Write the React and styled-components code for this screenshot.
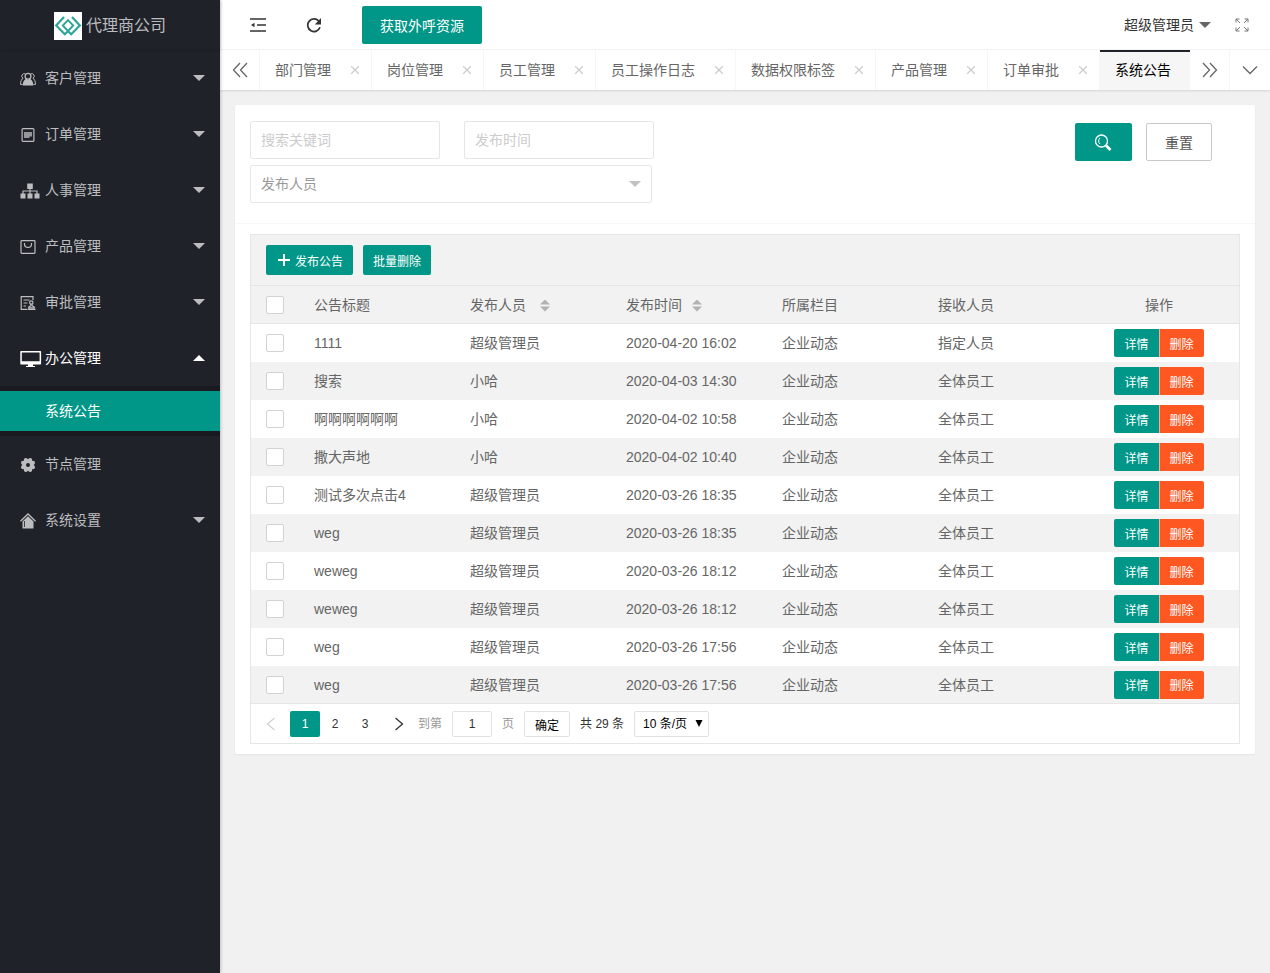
import { useState } from "react";
import styled, { createGlobalStyle, css } from "styled-components";

const menus = [
    { name: "客户管理", icon: "users", more: true },
    { name: "订单管理", icon: "order", more: true },
    { name: "人事管理", icon: "tree", more: true },
    { name: "产品管理", icon: "bag", more: true },
    { name: "审批管理", icon: "approve", more: true },
    { name: "办公管理", icon: "screen", more: true, children: ["系统公告"] },
    { name: "节点管理", icon: "gear" },
    { name: "系统设置", icon: "home", more: true },
];

const tabs = ["部门管理", "岗位管理", "员工管理", "员工操作日志", "数据权限标签", "产品管理", "订单审批"];

const rows = [
    ["1111", "超级管理员", "2020-04-20 16:02", "企业动态", "指定人员"],
    ["搜索", "小哈", "2020-04-03 14:30", "企业动态", "全体员工"],
    ["啊啊啊啊啊啊", "小哈", "2020-04-02 10:58", "企业动态", "全体员工"],
    ["撒大声地", "小哈", "2020-04-02 10:40", "企业动态", "全体员工"],
    ["测试多次点击4", "超级管理员", "2020-03-26 18:35", "企业动态", "全体员工"],
    ["weg", "超级管理员", "2020-03-26 18:35", "企业动态", "全体员工"],
    ["weweg", "超级管理员", "2020-03-26 18:12", "企业动态", "全体员工"],
    ["weweg", "超级管理员", "2020-03-26 18:12", "企业动态", "全体员工"],
    ["weg", "超级管理员", "2020-03-26 17:56", "企业动态", "全体员工"],
    ["weg", "超级管理员", "2020-03-26 17:56", "企业动态", "全体员工"],
];

const menuIcons = {
    users: (
        <svg width="16" height="14" viewBox="0 0 16 14">
            <g fill="none" stroke="currentColor">
                <path d="M5.500 2A2.400 2.400 0 1 0 3 6.200C1.400 7.200.6 9.400.5 12.400h2M10.500 2A2.400 2.400 0 1 1 13 6.200c1.600 1 2.400 3.200 2.500 6.200h-2" />
            </g>
            <path d="M6.200 6.800C3.800 8 2.800 10 2.700 13.400h10.600C13.200 10 12.200 8 9.800 6.800L8 7.600z" fill="currentColor" />
            <circle cx="8" cy="4.300" r="2.900" fill="#20222a" stroke="currentColor" strokeWidth="1.300" />
        </svg>
    ),
    order: (
        <svg width="16" height="14" viewBox="-1 0 16 14">
            <rect x="1.100" y=".6" width="11.800" height="12.800" rx="1" fill="none" stroke="currentColor" strokeWidth="1.200" />
            <path d="M3 4h8v4.500H8.500V10H3z" fill="currentColor" opacity=".75" />
        </svg>
    ),
    tree: (
        <svg width="20" height="16" viewBox="0 0 20 16">
            <path d="M10 5v6M3 11V8h14v3" fill="none" stroke="currentColor" strokeWidth="1.200" />
            <path d="M7.200.5h5.600V6H7.200zM.5 10.500h5v5h-5zM7.500 10.500h5v5h-5zM14.500 10.500h5v5h-5z" fill="currentColor" />
        </svg>
    ),
    bag: (
        <svg width="16" height="14" viewBox="0 0 16 14" fill="none" stroke="currentColor" strokeWidth="1.200">
            <rect x="1" y=".6" width="14" height="12.800" rx=".8" />
            <path d="M4.500 3v1.200c0 4.300 7 4.300 7 0V3" />
        </svg>
    ),
    approve: (
        <svg width="16" height="14" viewBox="0 0 16 14" fill="none" stroke="currentColor" strokeWidth="1.200">
            <path d="M13 4V.6H1.200v12.800H7M3.500 4h6M3.500 7h4M3.500 10H6" />
            <circle cx="11.300" cy="6.500" r="1.700" />
            <path d="M10.800 8.200v1.600c-1.400.3-2.300 1-2.300 2h6c0-1-.9-1.700-2.300-2V8.200M7.500 13.400h8" />
        </svg>
    ),
    screen: (
        <svg width="22" height="16" viewBox="0 0 22 16">
            <path d="M1 0h19.400c.4 0 .7.300.7.700v12c0 .4-.3.700-.7.700H13V15h2v1H6v-1h2v-1.600H1c-.4 0-.7-.3-.7-.7v-12C.3.3.6 0 1 0zM1.800 1.500v8.700h17.800V1.500z" fill="currentColor" fillRule="evenodd" />
        </svg>
    ),
    gear: (
        <svg width="16" height="14" viewBox="-1 0 16 14">
            <circle cx="7" cy="7" r="4" fill="none" stroke="currentColor" strokeWidth="4" />
            <g fill="currentColor">
                <circle cx="4.800" cy="2" r="2" />
                <circle cx="9.200" cy="2" r="2" />
                <circle cx="4.800" cy="12" r="2" />
                <circle cx="9.200" cy="12" r="2" />
                <circle cx="2" cy="4.800" r="2" />
                <circle cx="2" cy="9.200" r="2" />
                <circle cx="12" cy="4.800" r="2" />
                <circle cx="12" cy="9.200" r="2" />
            </g>
        </svg>
    ),
    home: (
        <svg width="16" height="16" viewBox="0 0 16 16">
            <path d="M.5 8.200 8 1l7.500 7.200" fill="none" stroke="currentColor" strokeWidth="1.300" />
            <path d="M8 3.300 13.500 8.500V15.500H2.500V8.500z" fill="currentColor" />
            <path d="M4.500 8v6" stroke="#20222a" strokeWidth=".8" />
        </svg>
    ),
};

const Chevron = ({ d, size = 16 }) => (
    <svg width={size} height={size} viewBox="0 0 16 16" fill="none" stroke="currentColor" strokeWidth="1.300">
        <path d={d} />
    </svg>
);

const App = () => {
    const [checked, setChecked] = useState([]);
    const [page, setPage] = useState(1);

    const toggle = (i) =>
        setChecked((prev) => (prev.includes(i) ? prev.filter((n) => n !== i) : [...prev, i]));

    const toggleAll = () => setChecked((prev) => (prev.length === rows.length ? [] : rows.map((_, i) => i)));

    return (
        <Layout>
            <GlobalStyle />
            <Sidebar>
                <Logo>
                    <svg width="28" height="28" viewBox="0 0 28 28" fill="none" stroke="#2fa59a" strokeWidth="2.200">
                        <rect width="28" height="28" fill="#fff" stroke="none" />
                        <path d="M10 5 2.200 13.500l8.600 8.700 3.200-3 3.200 3 8.600-8.700L18 5" />
                        <path d="m14 8.200 5.200 5.300-5.200 5.500-5.200-5.500z" strokeWidth="1.900" />
                    </svg>
                    代理商公司
                </Logo>
                <nav>
                    {menus.map((menu) => (
                        <div key={menu.name}>
                            <MenuLink href="#" $open={!!menu.children}>
                                <MenuIcon>{menuIcons[menu.icon]}</MenuIcon>
                                {menu.name}
                                {menu.more && <Caret $up={!!menu.children} />}
                            </MenuLink>
                            {menu.children && (
                                <SubMenu>
                                    {menu.children.map((child) => (
                                        <SubLink href="#" key={child}>{child}</SubLink>
                                    ))}
                                </SubMenu>
                            )}
                        </div>
                    ))}
                </nav>
            </Sidebar>

            <Main>
                <Header>
                    <IconButton aria-label="收起菜单">
                        <svg width="16" height="14" viewBox="0 0 16 14" fill="none" stroke="currentColor" strokeWidth="1.500">
                            <path d="M0 1h16M7 7h9M0 13h16" />
                            <path d="M4.500 4.800v4.400L1 7z" fill="currentColor" stroke="none" />
                        </svg>
                    </IconButton>
                    <IconButton aria-label="刷新">
                        <svg width="16" height="16" viewBox="0 0 16 16">
                            <path d="M14 10.300A6.300 6.300 0 1 1 12.700 4" fill="none" stroke="currentColor" strokeWidth="1.700" />
                            <path d="M15 1v6.500H8.800z" fill="currentColor" />
                        </svg>
                    </IconButton>
                    <CallButton>获取外呼资源</CallButton>
                    <User href="#">
                        超级管理员
                        <Caret />
                    </User>
                    <FullButton aria-label="全屏">
                        <svg width="14" height="14" viewBox="0 0 14 14" fill="none" stroke="currentColor">
                            <path d="M1 4.500V1h3.500M1 1l4 4M9.500 1H13v3.500M13 1 9 5M1 9.500V13h3.500M1 13l4-4M9.500 13H13V9.500M13 13 9 9" />
                        </svg>
                    </FullButton>
                </Header>

                <TabBar>
                    <TabControl aria-label="向左"><Chevron d="M8 1 1.500 8 8 15M15 1 8.500 8 15 15" /></TabControl>
                    <TabList>
                        {tabs.map((tab) => (
                            <Tab key={tab}>
                                <a href="#">{tab}</a>
                                <CloseButton aria-label={`关闭${tab}`}>
                                    <svg width="8" height="8" viewBox="0 0 8 8" stroke="currentColor" strokeWidth="1.300">
                                        <path d="m0 0 8 8M8 0 0 8" />
                                    </svg>
                                </CloseButton>
                            </Tab>
                        ))}
                        <Tab $active><a href="#">系统公告</a></Tab>
                    </TabList>
                    <TabControl aria-label="向右"><Chevron d="M1 1 7.500 8 1 15M8 1l6.500 7L8 15" /></TabControl>
                    <TabControl aria-label="更多"><Chevron d="m1 4.500 7 7 7-7" /></TabControl>
                </TabBar>

                <Content>
                    <Card>
                        <SearchForm onSubmit={(e) => e.preventDefault()}>
                            <Fields>
                                <Input placeholder="搜索关键词" aria-label="搜索关键词" />
                                <Input placeholder="发布时间" aria-label="发布时间" />
                                <SelectWrap>
                                    <Select aria-label="发布人员">
                                        <option>发布人员</option>
                                        <option>超级管理员</option>
                                        <option>小哈</option>
                                    </Select>
                                    <Caret />
                                </SelectWrap>
                            </Fields>
                            <Actions>
                                <SearchButton aria-label="搜索">
                                    <svg width="18" height="18" viewBox="0 0 18 18" fill="none" stroke="currentColor">
                                        <circle cx="7.500" cy="8" r="6" strokeWidth="1.300" />
                                        <path d="M6 5c-1.800 1.500-1.800 4.500 0 6" />
                                        <path d="m12 12.500 4.500 4.500" strokeWidth="2.800" />
                                    </svg>
                                </SearchButton>
                                <ResetButton type="reset">重置</ResetButton>
                            </Actions>
                        </SearchForm>

                        <TableArea>
                            <TableBox>
                                <Toolbar>
                                    <SmallButton>
                                        <svg width="12" height="12" viewBox="0 0 12 12" stroke="currentColor" strokeWidth="2">
                                            <path d="M6 0v12M0 6h12" />
                                        </svg>
                                        发布公告
                                    </SmallButton>
                                    <SmallButton>批量删除</SmallButton>
                                </Toolbar>
                                <Table>
                                    <colgroup>
                                        <CheckCol />
                                        <DataCol span={5} />
                                        <col />
                                    </colgroup>
                                    <thead>
                                        <tr>
                                            <th>
                                                <Checkbox
                                                    aria-label="全选"
                                                    checked={checked.length === rows.length}
                                                    onChange={toggleAll}
                                                />
                                            </th>
                                            <th>公告标题</th>
                                            <th>发布人员<SortIcon $wide /></th>
                                            <th>发布时间<SortIcon /></th>
                                            <th>所属栏目</th>
                                            <th>接收人员</th>
                                            <th>操作</th>
                                        </tr>
                                    </thead>
                                    <tbody>
                                        {rows.map((row, i) => (
                                            <tr key={i}>
                                                <td>
                                                    <Checkbox
                                                        aria-label={`选择${row[0]}`}
                                                        checked={checked.includes(i)}
                                                        onChange={() => toggle(i)}
                                                    />
                                                </td>
                                                {row.map((cell, n) => <td key={n}>{cell}</td>)}
                                                <td>
                                                    <RowButtons>
                                                        <RowButton>详情</RowButton>
                                                        <RowButton $danger>删除</RowButton>
                                                    </RowButtons>
                                                </td>
                                            </tr>
                                        ))}
                                    </tbody>
                                </Table>
                                <Pager>
                                    <PageArrow aria-label="上一页" disabled={page === 1} onClick={() => setPage(page - 1)}>
                                        <Chevron d="m11.500 2-7 6 7 6" />
                                    </PageArrow>
                                    {[1, 2, 3].map((n) => (
                                        <PageButton key={n} $current={n === page} onClick={() => setPage(n)}>{n}</PageButton>
                                    ))}
                                    <PageArrow aria-label="下一页" disabled={page === 3} onClick={() => setPage(page + 1)}>
                                        <Chevron d="m4.500 2 7 6-7 6" />
                                    </PageArrow>
                                    <Jump>
                                        <label htmlFor="jump">到第</label>
                                        <PageInput id="jump" defaultValue="1" />
                                        <span>页</span>
                                        <ConfirmButton>确定</ConfirmButton>
                                        <Total>共 29 条</Total>
                                        <LimitWrap>
                                            <LimitSelect aria-label="每页条数">
                                                <option>10 条/页</option>
                                                <option>20 条/页</option>
                                                <option>50 条/页</option>
                                            </LimitSelect>
                                            <svg width="8" height="7" viewBox="0 0 8 7"><path d="M.5 0h7L4 7z" /></svg>
                                        </LimitWrap>
                                    </Jump>
                                </Pager>
                            </TableBox>
                        </TableArea>
                    </Card>
                </Content>
            </Main>
        </Layout>
    );
};

const GlobalStyle = createGlobalStyle`
  * {
    box-sizing: border-box;
  }

  body {
    margin: 0;
    background: #f1f1f1;
    color: #666;
    line-height: 24px;
  }

  body, button, input, select {
    font-family: "Liberation Sans", "Noto Sans CJK SC", sans-serif;
    font-size: 14px;
  }

  button {
    padding: 0;
    border: none;
    background: none;
    color: inherit;
    cursor: pointer;
  }

  a {
    color: inherit;
    text-decoration: none;
  }

  svg {
    display: block;
    flex: none;
  }
`;

const Layout = styled.div`
  display: flex;
  min-height: 100vh;
`;

const Sidebar = styled.aside`
  flex: none;
  width: 220px;
  background: #20222a;
  color: #bcbdbf;
  box-shadow: 1px 0 3px rgba(0, 0, 0, .2);
  z-index: 1;
`;

const Logo = styled.div`
  display: flex;
  align-items: center;
  justify-content: center;
  gap: 4px;
  height: 50px;
  padding-top: 2px;
  font-size: 16px;
  box-shadow: 0 1px 2px rgba(0, 0, 0, .15);
`;

const Caret = styled.span`
  width: 12px;
  height: 6px;
  background: currentColor;
  clip-path: ${({ $up }) => ($up ? "polygon(0 100%, 100% 100%, 50% 0)" : "polygon(0 0, 100% 0, 50% 100%)")};
`;

const MenuLink = styled.a`
  display: flex;
  align-items: center;
  height: 56px;
  padding: 0 15px 0 20px;
  color: ${({ $open }) => ($open ? "#fff" : "inherit")};

  ${Caret} {
    margin-left: auto;
  }
`;

const MenuIcon = styled.span`
  width: 16px;
  margin-right: 9px;
  padding-top: 1px;

  svg {
    overflow: visible;
  }
`;

const SubMenu = styled.div`
  padding: 5px 0;
  background: #191a20;
`;

const SubLink = styled.a`
  display: block;
  padding-left: 45px;
  line-height: 40px;
  background: #009688;
  color: #fff;
`;

const Main = styled.div`
  flex: 1;
  min-width: 0;
`;

const Header = styled.header`
  display: flex;
  align-items: center;
  height: 50px;
  padding: 0 21px 0 10px;
  background: #fff;
  box-shadow: inset 0 -1px #f6f6f6;
  color: #333;
`;

const IconButton = styled.button`
  display: flex;
  align-items: center;
  justify-content: center;
  width: 56px;
  height: 52px;
`;

const solid = css`
  background: #009688;
  color: #fff;
  border-radius: 2px;
`;

const CallButton = styled.button`
  ${solid}
  height: 38px;
  margin-left: 20px;
  padding: 0 18px;
`;

const User = styled.a`
  display: flex;
  align-items: center;
  gap: 5px;
  margin-left: auto;

  ${Caret} {
    color: #666;
  }
`;

const FullButton = styled.button`
  margin-left: 24px;
  color: #777;
`;

const TabBar = styled.div`
  position: relative;
  display: flex;
  height: 40px;
  background: #fff;
  box-shadow: 0 1px 2px rgba(0, 0, 0, .12);
`;

const TabControl = styled.button`
  display: flex;
  flex: none;
  align-items: center;
  justify-content: center;
  width: 40px;
  border-right: 1px solid #f6f6f6;

  &:last-child {
    border-right: none;
  }
`;

const TabList = styled.div`
  display: flex;
  flex: 1;
  min-width: 0;
  overflow: hidden;
`;

const Tab = styled.div`
  display: flex;
  flex: none;
  align-items: center;
  gap: 16px;
  padding: 0 8px 0 15px;
  border-right: 1px solid #f6f6f6;
  line-height: 40px;

  ${({ $active }) => $active && css`
    padding-right: 19px;
    background: linear-gradient(#20222a, #20222a) top / 100% 2px no-repeat #f6f6f6;
    color: #000;
  `}
`;

const CloseButton = styled.button`
  display: flex;
  align-items: center;
  justify-content: center;
  width: 16px;
  height: 16px;
  color: #ccc;
`;

const Content = styled.main`
  padding: 15px;
`;

const Card = styled.section`
  background: #fff;
  border-radius: 2px;
  box-shadow: 0 1px 2px rgba(0, 0, 0, .05);
`;

const SearchForm = styled.form`
  display: flex;
  justify-content: space-between;
  padding: 16px 43px 20px 15px;
  border-bottom: 1px solid #f6f6f6;
`;

const Fields = styled.div`
  display: grid;
  grid-template-columns: 190px 190px;
  gap: 6px 24px;
`;

const field = css`
  height: 38px;
  padding: 0 10px;
  background: #fff;
  border: 1px solid #e6e6e6;
  border-radius: 2px;
  outline: none;
`;

const Input = styled.input`
  ${field}
  width: 100%;

  &::placeholder {
    color: #ccc;
  }
`;

const SelectWrap = styled.div`
  position: relative;
  grid-column: 1 / -1;
  height: 38px;
  margin-right: 2px;

  ${Caret} {
    position: absolute;
    top: 16px;
    right: 11px;
    color: #c2c2c2;
    pointer-events: none;
  }
`;

const Select = styled.select`
  ${field}
  appearance: none;
  display: block;
  width: 100%;
  color: #999;
`;

const Actions = styled.div`
  display: flex;
  gap: 14px;
  padding-top: 2px;
`;

const SearchButton = styled.button`
  ${solid}
  height: 38px;
  padding: 0 20px 0 19px;
`;

const ResetButton = styled.button`
  height: 38px;
  padding: 0 18px;
  border: 1px solid #c9c9c9;
  border-radius: 2px;
  color: #555;
`;

const TableArea = styled.div`
  padding: 10px 15px;
`;

const TableBox = styled.div`
  border: 1px solid #e6e6e6;
`;

const Toolbar = styled.div`
  display: flex;
  gap: 10px;
  padding: 10px 15px;
  background: #f2f2f2;
  border-bottom: 1px solid #e6e6e6;
`;

const SmallButton = styled.button`
  ${solid}
  display: flex;
  align-items: center;
  gap: 5px;
  height: 30px;
  padding: 0 10px;
  font-size: 12px;

  svg {
    margin-left: 2px;
  }
`;

const CheckCol = styled.col`
  width: 48px;
`;

const DataCol = styled.col`
  width: 156px;
`;

const Table = styled.table`
  width: 100%;
  table-layout: fixed;
  border-spacing: 0;

  th, td {
    height: 38px;
    padding: 0 15px;
    font-weight: 400;
    line-height: 28px;
    text-align: left;
    white-space: nowrap;
  }

  th {
    background: #f2f2f2;
    border-bottom: 1px solid #e6e6e6;
  }

  th:last-child, td:last-child {
    text-align: center;
  }

  tbody tr:nth-child(even) {
    background: #f2f2f2;
  }

  tbody tr:last-child td {
    border-bottom: 1px solid #e6e6e6;
  }
`;

const Checkbox = styled.input.attrs({ type: "checkbox" })`
  appearance: none;
  display: block;
  width: 18px;
  height: 18px;
  margin: 0;
  border: 1px solid #d2d2d2;
  border-radius: 2px;
  background: #fff;

  &:checked {
    background: #009688;
    border-color: #009688;
  }
`;

const SortIcon = styled.span`
  display: inline-block;
  width: 10px;
  height: 12px;
  margin-left: ${({ $wide }) => ($wide ? 14 : 10)}px;
  vertical-align: -2px;
  background: #b2b2b2;
  clip-path: polygon(50% 0, 100% 5px, 100% 7px, 50% 100%, 0 7px, 100% 7px, 100% 5px, 0 5px);
`;

const RowButtons = styled.div`
  display: flex;
  justify-content: center;
`;

const RowButton = styled.button`
  height: 28px;
  padding: 0 10px;
  background: ${({ $danger }) => ($danger ? "#ff5722" : "#009688")};
  border-left: ${({ $danger }) => ($danger ? "1px solid #ffab90" : "none")};
  border-radius: ${({ $danger }) => ($danger ? "0 2px 2px 0" : "2px 0 0 2px")};
  color: #fff;
  font-size: 12px;
`;

const Pager = styled.div`
  display: flex;
  align-items: center;
  padding: 7px 1px 6px;
  color: #333;

  &, button, input, select {
    font-size: 12px;
  }
`;

const PageArrow = styled.button`
  display: flex;
  align-items: center;
  justify-content: center;
  width: 38px;
  height: 26px;

  &:disabled {
    color: #d2d2d2;
  }
`;

const PageButton = styled.button`
  width: 30px;
  height: 26px;
  border-radius: 2px;
  ${({ $current }) => $current && solid}
`;

const Jump = styled.div`
  display: flex;
  align-items: center;
  gap: 10px;
  color: #999;
`;

const small = css`
  height: 26px;
  background: #fff;
  border: 1px solid #e2e2e2;
  border-radius: 2px;
  color: #000;
`;

const PageInput = styled.input`
  ${small}
  width: 40px;
  text-align: center;
  color: #333;
`;

const ConfirmButton = styled.button`
  ${small}
  padding: 0 10px;
`;

const Total = styled.span`
  color: #333;
`;

const LimitWrap = styled.div`
  position: relative;

  svg {
    position: absolute;
    top: 9px;
    right: 6px;
    fill: #000;
    pointer-events: none;
  }
`;

const LimitSelect = styled.select`
  ${small}
  appearance: none;
  display: block;
  width: 75px;
  padding: 0 8px;
`;

export default App;
